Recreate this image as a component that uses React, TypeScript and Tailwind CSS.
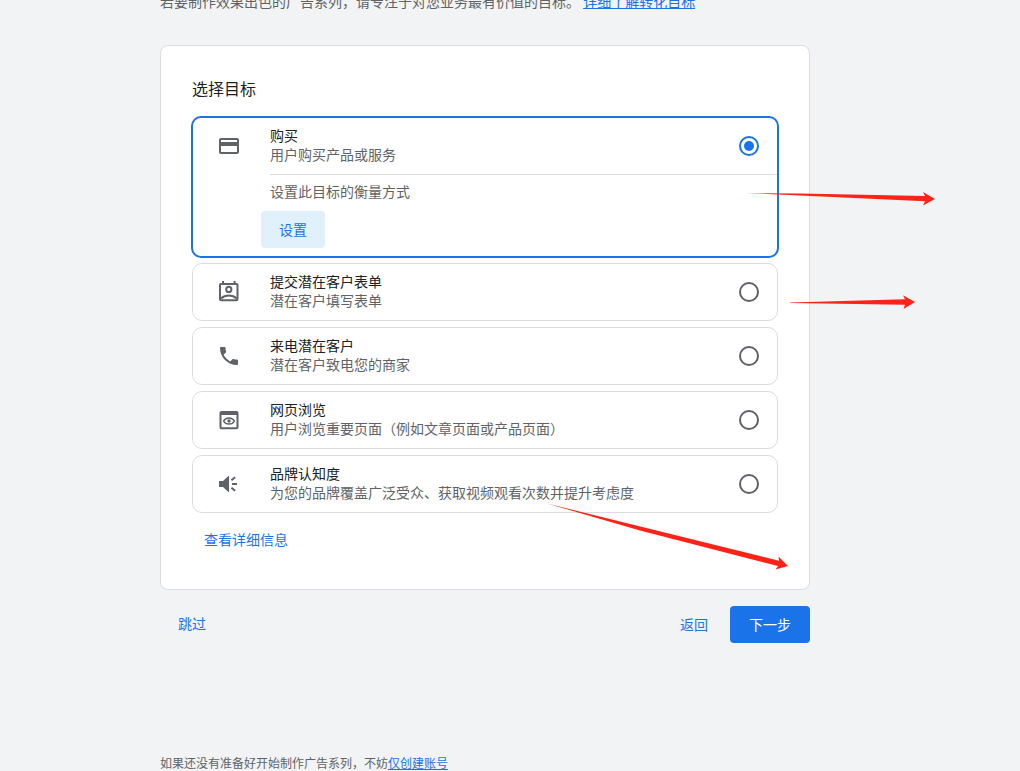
import { useState } from "react";
import type { ReactNode } from "react";
import { MdCreditCard, MdPhone } from "react-icons/md";

type Goal = {
  id: string;
  title: string;
  text: string;
  icon: ReactNode;
};

// calendar page with a person
function ContactIcon() {
  return (
    <svg width="24" height="24" viewBox="0 0 24 24" fill="none" stroke="currentColor" strokeWidth="2">
      <rect x="3" y="4" width="17.5" height="16.3" rx="1" />
      <path d="M6 1v3M17.6 1v3" />
      <circle cx="11.8" cy="9.4" r="2.6" />
      <path d="M4 18.4c2-1.9 4.700-2.900 7.800-2.900s5.800 1 7.800 2.900" />
    </svg>
  );
}

// browser window with an eye
function PreviewIcon() {
  return (
    <svg width="24" height="24" viewBox="0 0 24 24" fill="none" stroke="currentColor">
      <rect x="3.500" y="4" width="17" height="16.200" rx="1" strokeWidth="2" />
      <path d="M3 5.500h18" strokeWidth="3" />
      <path
        d="M6.600 13c1-2 3-3.100 5.400-3.100s4.400 1.100 5.400 3.100c-1 2-3 3.100-5.400 3.100s-4.400-1.100-5.400-3.100z"
        strokeWidth="1.500"
      />
      <circle cx="12" cy="13" r="1.700" fill="currentColor" stroke="none" />
    </svg>
  );
}

// speaker with three rays
function AwarenessIcon() {
  return (
    <svg width="24" height="24" viewBox="0 0 24 24" fill="currentColor">
      <path d="M2 9h4l6-5.5v17L6 15H2z" />
      <path
        d="M15 12h5M14.4 8.2l3.8-2.900M14.4 15.8l3.8 2.900"
        stroke="currentColor"
        strokeWidth="2"
      />
    </svg>
  );
}

const goals: Goal[] = [
  {
    id: "purchase",
    title: "购买",
    text: "用户购买产品或服务",
    icon: <MdCreditCard size={24} />,
  },
  {
    id: "form",
    title: "提交潜在客户表单",
    text: "潜在客户填写表单",
    icon: <ContactIcon />,
  },
  {
    id: "call",
    title: "来电潜在客户",
    text: "潜在客户致电您的商家",
    icon: <MdPhone size={24} />,
  },
  {
    id: "view",
    title: "网页浏览",
    text: "用户浏览重要页面（例如文章页面或产品页面）",
    icon: <PreviewIcon />,
  },
  {
    id: "brand",
    title: "品牌认知度",
    text: "为您的品牌覆盖广泛受众、获取视频观看次数并提升考虑度",
    icon: <AwarenessIcon />,
  },
];

// red hand-drawn arrows over the page
function Arrows() {
  return (
    <svg
      className="pointer-events-none absolute top-0 left-0"
      width="1020"
      height="771"
      viewBox="0 0 1020 771"
      fill="#ff2317"
      aria-hidden="true"
    >
      <path d="M746 193L800 193.5L925 196L923 192L935 199L923 205.5L925 201.2L800 195.4Z" />
      <path d="M790 302.4L905 299.2L903 295.3L915 302L903.5 309L905 304.8L790 303Z" />
      <path d="M547 503.5L779 560.8L778.5 556.5L788 566L775.5 569.5L778 566L640 530.5Z" />
    </svg>
  );
}

export default function App() {
  const [selected, setSelected] = useState("purchase");

  return (
    <div className="relative min-h-screen overflow-hidden bg-[#f1f3f4] font-['Noto_Sans_CJK_SC',sans-serif] text-sm text-[#5f6368]">
      <main className="ml-40 max-w-[650px]">
        {/* intro */}
        <p className="-mt-[9px] leading-5">
          若要制作效果出色的广告系列，请专注于对您业务最有价值的目标。{" "}
          <a href="#goals" className="text-[#1a73e8] underline">
            详细了解转化目标
          </a>
        </p>

        {/* goals card */}
        <section className="mt-[34px] rounded-lg border border-[#dadce0] bg-white px-[31px] py-[30px]">
          <h2 className="text-base leading-6 text-[#202124]">选择目标</h2>

          <div className="mt-[17px] flex flex-col gap-1.5">
            {goals.map((goal) => {
              const active = goal.id === selected;
              return (
                <div
                  key={goal.id}
                  className={
                    active
                      ? "-m-px rounded-[10px] border-2 border-[#1a73e8]"
                      : "rounded-[10px] border border-[#dadce0]"
                  }
                >
                  <label className="flex cursor-pointer items-center gap-[29px] py-2 pr-[18px] pl-6 leading-[19px]">
                    <span className="shrink-0">{goal.icon}</span>
                    <span className="flex-1 pb-0.5">
                      <span className="block text-[#202124]">{goal.title}</span>
                      <span className="block">{goal.text}</span>
                    </span>
                    <input
                      type="radio"
                      name="goal"
                      checked={active}
                      onChange={() => setSelected(goal.id)}
                      className="size-5 shrink-0 appearance-none rounded-full border-2 border-[#5f6368] bg-clip-content p-[3px] checked:border-[#1a73e8] checked:bg-[#1a73e8]"
                    />
                  </label>

                  {active && (
                    <div className="pb-2">
                      <div className="ml-[77px] border-t border-[#dadce0] pt-[7px] leading-[19px]">
                        设置此目标的衡量方式
                      </div>
                      <button className="mt-2.5 ml-[68px] h-[37px] rounded bg-[#e1f1fb] px-[18px] pb-0.5 text-[#1a73e8]">
                        设置
                      </button>
                    </div>
                  )}
                </div>
              );
            })}
          </div>

          <a
            href="#details"
            className="mt-1.5 ml-3 inline-block align-top leading-10 text-[#1a73e8]"
          >
            查看详细信息
          </a>
        </section>

        {/* buttons */}
        <div className="mt-4 flex items-center gap-1 text-[#1a73e8]">
          <button className="mr-auto h-[37px] px-[18px] pb-1">跳过</button>
          <button className="h-[37px] px-[18px] pb-0.5">返回</button>
          <button className="h-[37px] w-20 rounded bg-[#1a73e8] pb-0.5 text-white">
            下一步
          </button>
        </div>

        {/* footer */}
        <p className="mt-28 text-xs leading-4">
          如果还没有准备好开始制作广告系列，不妨
          <a href="#account" className="text-[#1a73e8] underline">
            仅创建账号
          </a>
        </p>
      </main>

      <Arrows />
    </div>
  );
}
